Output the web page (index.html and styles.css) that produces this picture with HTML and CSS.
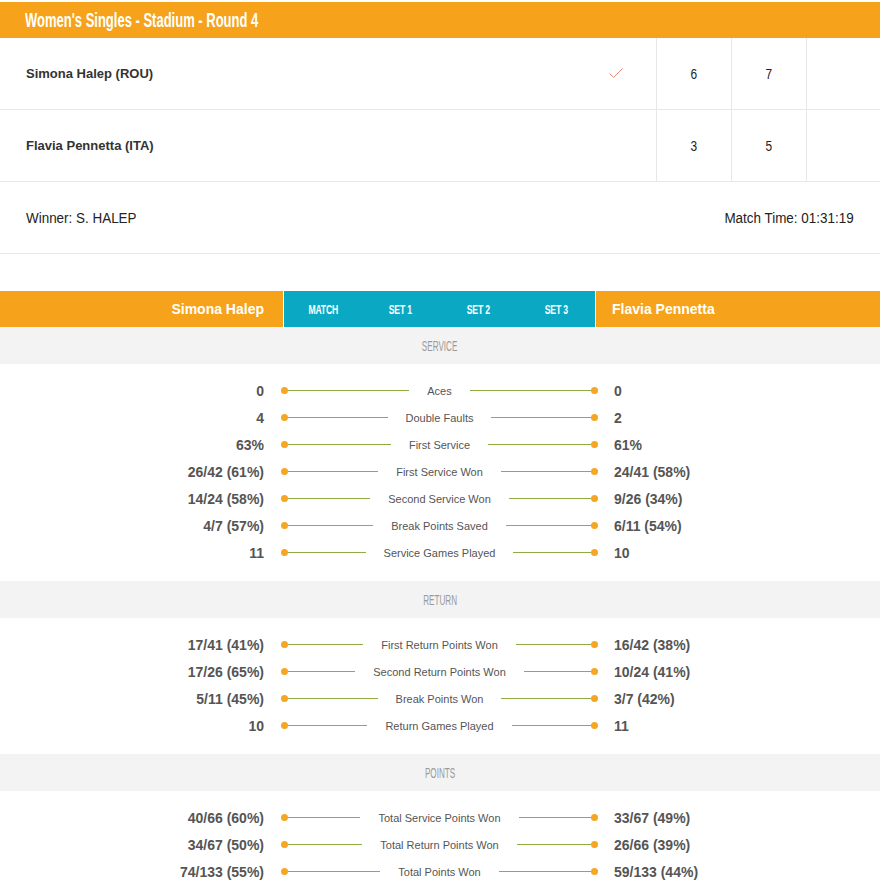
FILE: index.html
```html
<!DOCTYPE html>
<html>
<head>
<meta charset="utf-8">
<link rel="stylesheet" href="styles.css">
</head>
<body>
<div class="page">
  <div class="title"><span class="title-text">Women's Singles - Stadium - Round 4</span></div>

  <div class="score-row">
    <div class="name">Simona Halep (ROU)</div>
    <div class="check"><svg width="16" height="12" viewBox="0 0 16 12"><path d="M1.5 6.5 L5.5 10.5 L14.5 1.5" fill="none" stroke="#e0917a" stroke-width="1"/></svg></div>
    <div class="set"><span class="n">6</span></div>
    <div class="set"><span class="n">7</span></div>
    <div class="set"></div>
  </div>
  <div class="score-row">
    <div class="name">Flavia Pennetta (ITA)</div>
    <div class="check"></div>
    <div class="set"><span class="n">3</span></div>
    <div class="set"><span class="n">5</span></div>
    <div class="set"></div>
  </div>
  <div class="winner-row">
    <span class="w-left">Winner: S. HALEP</span>
    <span class="w-right">Match Time: 01:31:19</span>
  </div>

  <div class="stats-head">
    <div class="p-left">Simona Halep</div>
    <div class="tabs">
      <span class="tab"><span class="tt">MATCH</span></span>
      <span class="tab"><span class="tt">SET 1</span></span>
      <span class="tab"><span class="tt">SET 2</span></span>
      <span class="tab"><span class="tt">SET 3</span></span>
    </div>
    <div class="p-right">Flavia Pennetta</div>
  </div>

  <div class="band"><span class="bt">SERVICE</span></div>
  <div class="stats">
    <div class="row"><div class="lv">0</div><div class="bar"><i></i><b></b><span>Aces</span><b></b><i></i></div><div class="rv">0</div></div>
    <div class="row"><div class="lv">4</div><div class="bar"><i></i><b></b><span>Double Faults</span><b></b><i></i></div><div class="rv">2</div></div>
    <div class="row"><div class="lv">63%</div><div class="bar"><i></i><b></b><span>First Service</span><b></b><i></i></div><div class="rv">61%</div></div>
    <div class="row"><div class="lv">26/42 (61%)</div><div class="bar"><i></i><b></b><span>First Service Won</span><b></b><i></i></div><div class="rv">24/41 (58%)</div></div>
    <div class="row"><div class="lv">14/24 (58%)</div><div class="bar"><i></i><b></b><span>Second Service Won</span><b></b><i></i></div><div class="rv">9/26 (34%)</div></div>
    <div class="row"><div class="lv">4/7 (57%)</div><div class="bar"><i></i><b></b><span>Break Points Saved</span><b></b><i></i></div><div class="rv">6/11 (54%)</div></div>
    <div class="row"><div class="lv">11</div><div class="bar"><i></i><b></b><span>Service Games Played</span><b></b><i></i></div><div class="rv">10</div></div>
  </div>

  <div class="band"><span class="bt">RETURN</span></div>
  <div class="stats">
    <div class="row"><div class="lv">17/41 (41%)</div><div class="bar"><i></i><b></b><span>First Return Points Won</span><b></b><i></i></div><div class="rv">16/42 (38%)</div></div>
    <div class="row"><div class="lv">17/26 (65%)</div><div class="bar"><i></i><b></b><span>Second Return Points Won</span><b></b><i></i></div><div class="rv">10/24 (41%)</div></div>
    <div class="row"><div class="lv">5/11 (45%)</div><div class="bar"><i></i><b></b><span>Break Points Won</span><b></b><i></i></div><div class="rv">3/7 (42%)</div></div>
    <div class="row"><div class="lv">10</div><div class="bar"><i></i><b></b><span>Return Games Played</span><b></b><i></i></div><div class="rv">11</div></div>
  </div>

  <div class="band"><span class="bt">POINTS</span></div>
  <div class="stats">
    <div class="row"><div class="lv">40/66 (60%)</div><div class="bar"><i></i><b></b><span>Total Service Points Won</span><b></b><i></i></div><div class="rv">33/67 (49%)</div></div>
    <div class="row"><div class="lv">34/67 (50%)</div><div class="bar"><i></i><b></b><span>Total Return Points Won</span><b></b><i></i></div><div class="rv">26/66 (39%)</div></div>
    <div class="row"><div class="lv">74/133 (55%)</div><div class="bar"><i></i><b></b><span>Total Points Won</span><b></b><i></i></div><div class="rv">59/133 (44%)</div></div>
  </div>
</div>
</body>
</html>
```

FILE: styles.css
```css
html, body {
  margin: 0;
  padding: 0;
  background: #fff;
}
body {
  font-family: "Liberation Sans", Arial, sans-serif;
  color: #333;
}
.page {
  width: 880px;
  padding-top: 2px;
}
.title {
  height: 36px;
  background: #f6a31b;
  color: #fff;
  display: flex;
  align-items: center;
  padding-left: 25px;
}
.title-text {
  display: inline-block;
  font-weight: bold;
  font-size: 20px;
  white-space: nowrap;
  transform: scaleX(0.65);
  transform-origin: left center;
}
.score-row {
  display: flex;
  height: 72px;
  border-bottom: 1px solid #e8e8e8;
  box-sizing: border-box;
}
.score-row .name {
  flex: 1;
  display: flex;
  align-items: center;
  padding-left: 26px;
  font-weight: bold;
  font-size: 13px;
  color: #333;
}
.score-row .check {
  width: 76px;
  display: flex;
  align-items: center;
  box-sizing: border-box;
}
.score-row .check svg {
  margin-left: 28px;
  margin-bottom: 2px;
}
.score-row .set {
  width: 75px;
  box-sizing: border-box;
  border-left: 1px solid #e8e8e8;
  display: flex;
  align-items: center;
  justify-content: center;
  font-size: 14px;
  color: #222;
}
.score-row .set:last-child {
  width: 74px;
}
.n {
  display: inline-block;
  transform: scaleX(0.85);
}
.winner-row {
  height: 72px;
  border-bottom: 1px solid #e8e8e8;
  box-sizing: border-box;
  display: flex;
  align-items: center;
  justify-content: space-between;
  padding: 0 26px;
  font-size: 14px;
  color: #222;
}
.w-left, .w-right {
  display: inline-block;
  white-space: nowrap;
  transform: scaleX(0.96);
}
.w-left { transform-origin: left center; }
.w-right { transform-origin: right center; }
.stats-head {
  margin-top: 37px;
  height: 36px;
  display: flex;
  color: #fff;
}
.p-left {
  width: 284px;
  background: #f6a31b;
  display: flex;
  align-items: center;
  justify-content: flex-end;
  padding-right: 19px;
  box-sizing: border-box;
  font-weight: bold;
  font-size: 14px;
  border-right: 1px solid #fff;
}
.tabs {
  width: 312px;
  box-sizing: border-box;
  background: #0ba8c3;
  display: flex;
  border-right: 1px solid #fff;
}
.tab {
  width: 78px;
  display: flex;
  align-items: center;
  justify-content: center;
}
.tt {
  display: inline-block;
  font-weight: bold;
  font-size: 13px;
  white-space: nowrap;
  transform: scaleX(0.665);
  letter-spacing: -0.3px;
}
.p-right {
  flex: 1;
  background: #f6a31b;
  display: flex;
  align-items: center;
  padding-left: 16px;
  font-weight: bold;
  font-size: 14px;
}
.band {
  height: 37px;
  background: #f3f3f3;
  display: flex;
  align-items: center;
  justify-content: center;
}
.bt {
  display: inline-block;
  font-size: 14px;
  color: #9a9a9a;
  transform: scaleX(0.58);
}
.stats {
  padding: 13px 0 15px;
}
.row {
  display: grid;
  grid-template-columns: 264px 317px 1fr;
  column-gap: 17px;
  height: 27px;
  align-items: center;
}
.lv {
  text-align: right;
  font-weight: bold;
  font-size: 14px;
  color: #555;
}
.rv {
  font-weight: bold;
  font-size: 14px;
  color: #555;
  margin-left: -1px;
}
.bar {
  display: flex;
  align-items: center;
}
.bar i {
  width: 7px;
  height: 7px;
  border-radius: 50%;
  background: #f5a623;
  flex: none;
}
.bar b {
  flex: 1;
  height: 1px;
  background: #8fac47;
}
.bar span {
  padding: 0 18px;
  font-size: 11px;
  color: #555;
  white-space: nowrap;
}
```
